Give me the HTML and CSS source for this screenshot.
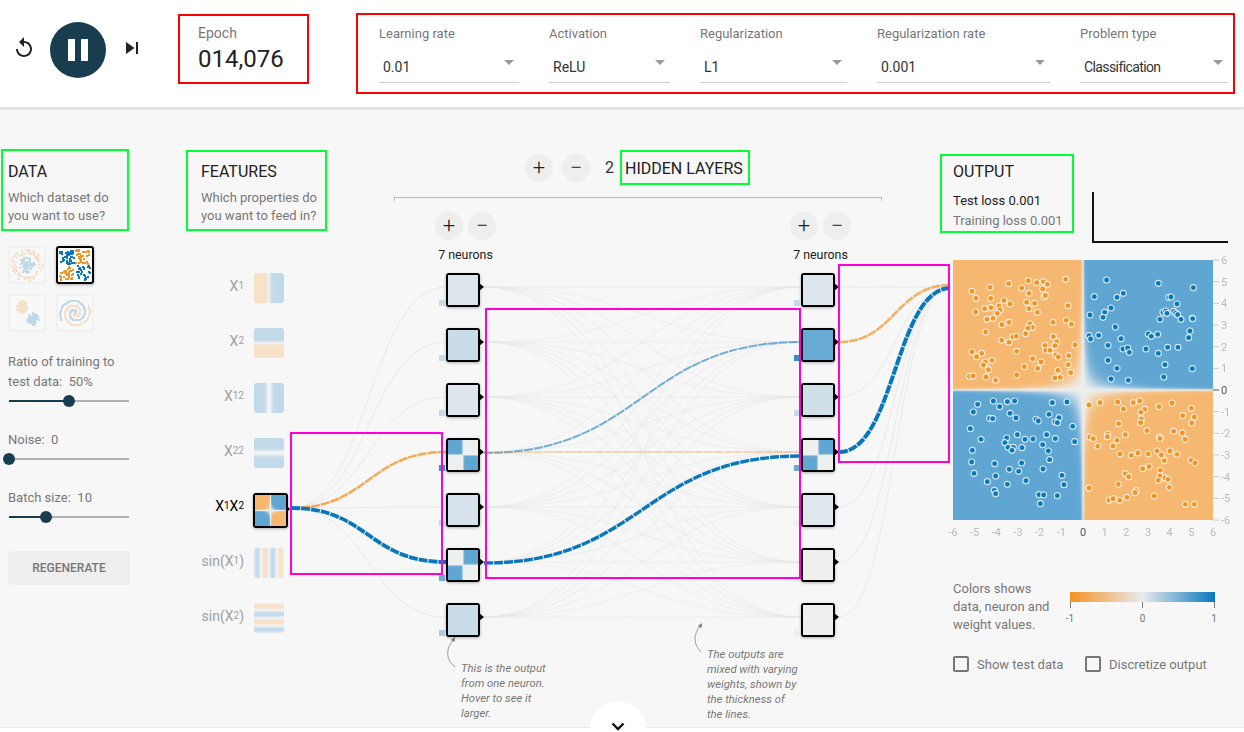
FILE: index.html
```html
<!DOCTYPE html>
<html>
<head>
<meta charset="UTF-8">
<title>Neural Network Playground</title>
<link rel="stylesheet" href="styles.css">
</head>
<body>
<header class="top">
  <div class="controls">
    <svg class="ico" viewBox="0 0 24 24"><path d="M12 5V1L7 6l5 5V7c3.31 0 6 2.69 6 6s-2.69 6-6 6-6-2.69-6-6H4c0 4.42 3.58 8 8 8s8-3.58 8-8-3.58-8-8-8z"/></svg>
    <div class="play"><i></i><i></i></div>
    <svg class="ico" viewBox="0 0 24 24"><path d="M6 18l8.5-6L6 6v12zM16 6v12h2V6h-2z"/></svg>
  </div>
  <div class="epoch">
    <div class="lbl">Epoch</div>
    <div class="val">014,076</div>
  </div>
  <div class="params">
    <div class="field w1"><label>Learning rate</label><div class="sel"><select><option>0.01</option></select></div></div>
    <div class="field w2"><label>Activation</label><div class="sel"><select><option>ReLU</option></select></div></div>
    <div class="field w3"><label>Regularization</label><div class="sel"><select><option>L1</option></select></div></div>
    <div class="field w4"><label>Regularization rate</label><div class="sel"><select><option>0.001</option></select></div></div>
    <div class="field w5"><label>Problem type</label><div class="sel"><select class="tight"><option>Classification</option></select></div></div>
  </div>
</header>

<main class="content">
  <svg id="links" class="links" viewBox="0 108 1244 619"></svg>

  <section class="col-data">
    <div class="head-box data-box">
      <h4>DATA</h4>
      <p>Which dataset do<br>you want to use?</p>
    </div>
    <div class="datasets">
      <div class="ds"><canvas width="34" height="34" data-ds="circle"></canvas></div>
      <div class="ds on"><canvas width="34" height="34" data-ds="xor"></canvas></div>
      <div class="ds"><canvas width="34" height="34" data-ds="gauss"></canvas></div>
      <div class="ds"><canvas width="34" height="34" data-ds="spiral"></canvas></div>
    </div>
    <div class="sl-label">Ratio of training to<br>test data:&nbsp; 50%</div>
    <div class="slider"><b style="width:50%"></b><i style="left:50%"></i></div>
    <div class="sl-label">Noise:&nbsp; 0</div>
    <div class="slider"><b style="width:0%"></b><i style="left:0%"></i></div>
    <div class="sl-label">Batch size:&nbsp; 10</div>
    <div class="slider"><b style="width:31%"></b><i style="left:31%"></i></div>
    <div class="regen">REGENERATE</div>
  </section>

  <section class="col-features">
    <div class="head-box feat-box">
      <h4>FEATURES</h4>
      <p>Which properties do<br>you want to feed in?</p>
    </div>
    <div class="feats">
      <div class="feat"><span class="fname">X<small>1</small></span><canvas width="30" height="30" data-f="x1"></canvas></div>
      <div class="feat"><span class="fname">X<small>2</small></span><canvas width="30" height="30" data-f="x2"></canvas></div>
      <div class="feat"><span class="fname">X<small>12</small></span><canvas width="30" height="30" data-f="x1sq"></canvas></div>
      <div class="feat"><span class="fname">X<small>22</small></span><canvas width="30" height="30" data-f="x2sq"></canvas></div>
      <div class="feat on"><span class="fname">X<small>1</small>X<small>2</small></span><div class="fwrap"><canvas width="31" height="31" data-f="xy"></canvas></div></div>
      <div class="feat"><span class="fname">sin(X<small>1</small>)</span><canvas width="30" height="30" data-f="sin1"></canvas></div>
      <div class="feat"><span class="fname">sin(X<small>2</small>)</span><canvas width="30" height="30" data-f="sin2"></canvas></div>
    </div>
  </section>

  <section class="col-net">
    <div class="hl-row">
      <div class="rbtn">+</div>
      <div class="rbtn">&minus;</div>
      <span class="hl-num">2</span>
      <div class="hl-box">HIDDEN LAYERS</div>
    </div>
    <div class="bracket"></div>
    <div class="layers">
      <div class="layer">
        <div class="lbtns"><div class="rbtn">+</div><div class="rbtn">&minus;</div></div>
        <div class="ncount">7 neurons</div>
        <div class="node"><canvas width="30" height="30" data-v="0.116"></canvas><i class="bias b-pale"></i></div>
        <div class="node"><canvas width="30" height="30" data-v="0.26"></canvas><i class="bias b-pale"></i></div>
        <div class="node"><canvas width="30" height="30" data-v="0.116"></canvas><i class="bias b-pale"></i></div>
        <div class="node"><canvas width="30" height="30" data-x="1"></canvas><i class="bias b-strong"></i></div>
        <div class="node"><canvas width="30" height="30" data-v="0.17"></canvas><i class="bias b-pale"></i></div>
        <div class="node"><canvas width="30" height="30" data-x="-1"></canvas><i class="bias b-mid"></i></div>
        <div class="node"><canvas width="30" height="30" data-v="0.26"></canvas><i class="bias b-soft"></i></div>
      </div>
      <div class="layer">
        <div class="lbtns"><div class="rbtn">+</div><div class="rbtn">&minus;</div></div>
        <div class="ncount">7 neurons</div>
        <div class="node"><canvas width="30" height="30" data-v="0.116"></canvas><i class="bias b-pale"></i></div>
        <div class="node"><canvas width="30" height="30" data-v="0.95"></canvas><i class="bias b-strong"></i></div>
        <div class="node"><canvas width="30" height="30" data-v="0.21"></canvas><i class="bias b-pale"></i></div>
        <div class="node"><canvas width="30" height="30" data-x="-1"></canvas><i class="bias b-mid"></i></div>
        <div class="node"><canvas width="30" height="30" data-v="0.1"></canvas><i class="bias b-faint"></i></div>
        <div class="node"><canvas width="30" height="30" data-v="0"></canvas><i class="bias b-faint"></i></div>
        <div class="node"><canvas width="30" height="30" data-v="0"></canvas><i class="bias b-faint"></i></div>
      </div>
    </div>
  </section>

  <section class="col-output">
    <div class="out-top">
      <div class="head-box out-box">
        <h4>OUTPUT</h4>
        <div class="loss dark">Test loss 0.001</div>
        <div class="loss">Training loss 0.001</div>
      </div>
      <div class="lossline"></div>
    </div>
    <div class="heat">
      <canvas id="heat" width="260" height="260"></canvas>
      <svg id="axis" class="axis"></svg>
    </div>
    <div class="legend">
      <p>Colors shows<br>data, neuron and<br>weight values.</p>
      <svg class="cbar" width="155" height="32" viewBox="-5 0 155 32">
        <defs><linearGradient id="cg"><stop offset="0" stop-color="#f59322"/><stop offset="0.5" stop-color="#e8eaeb"/><stop offset="1" stop-color="#0877bd"/></linearGradient></defs>
        <rect width="145" height="10" fill="url(#cg)"/>
        <path d="M0.5 10v6M72.5 10v6M144.5 10v6" stroke="#777"/>
        <text x="0" y="30">-1</text><text x="72.5" y="30">0</text><text x="144" y="30">1</text>
      </svg>
    </div>
    <div class="checks">
      <div class="chk c1"><i></i>Show test data</div>
      <div class="chk"><i></i>Discretize output</div>
    </div>
  </section>

  <p class="note n1">This is the output<br>from one neuron.<br>Hover to see it<br>larger.</p>
  <p class="note n2">The outputs are<br>mixed with varying<br>weights, shown by<br>the thickness of<br>the lines.</p>

  <div class="mark m1"></div>
  <div class="mark m2"></div>
  <div class="mark m3"></div>
</main>

<footer class="foot">
  <div class="more"><svg width="14" height="9" viewBox="0 0 14 9"><path d="M1.5 1.5L7 7l5.5-5.5" fill="none" stroke="#111" stroke-width="2.4"/></svg></div>
</footer>
<script src="script.js"></script>
</body>
</html>
```

FILE: styles.css
```css
* { box-sizing: border-box; }
html, body { margin: 0; height: 100%; }
body {
  width: 1244px;
  height: 732px;
  overflow: hidden;
  display: flex;
  flex-direction: column;
  background: #fff;
  color: #333;
  font-family: "Roboto", "Liberation Sans", sans-serif;
  font-size: 14px;
}
canvas { display: block; }

/* top bar */
.top {
  height: 108px;
  flex: none;
  display: flex;
  align-items: flex-start;
  background: #fff;
  box-shadow: 0 1px 2px rgba(0,0,0,0.15);
  border-bottom: 1px solid #e4e4e4;
  position: relative;
  z-index: 3;
}
.controls {
  display: flex;
  align-items: center;
  height: 56px;
  margin-top: 22px;
  margin-left: 12px;
}
.ico { width: 24px; height: 24px; margin-bottom: 4px; fill: #222; }
.play {
  width: 56px;
  height: 56px;
  margin: 0 14px;
  border-radius: 50%;
  background: #183d4e;
  display: flex;
  justify-content: center;
  align-items: center;
  gap: 6px;
}
.play i { width: 7px; height: 22px; background: #fff; }
.epoch {
  width: 131px;
  height: 70px;
  margin: 14px 0 0 34px;
  padding: 8px 0 0 18px;
  border: 2px solid #f00;
}
.epoch .lbl { font-size: 14px; line-height: 18px; color: #777; }
.epoch .val { font-size: 24px; line-height: 30px; margin-top: 2px; color: #222; }
.params {
  display: flex;
  gap: 30px;
  margin: 13px 0 0 47px;
  padding: 11px 5px 9px 21px;
  border: 2px solid #f00;
}
.w1 { width: 140px; }
.w2 { width: 121px; }
.w3 { width: 147px; }
.w4 { width: 173px; }
.w5 { width: 148px; }
.field label { display: block; font-size: 13px; line-height: 16px; color: #777; }
.sel { position: relative; margin-top: 11px; }
.sel select {
  display: block;
  width: 100%;
  height: 30px;
  padding: 0 0 2px 4px;
  appearance: none;
  border: 0;
  border-bottom: 1px solid #ccc;
  border-radius: 0;
  background: none;
  color: #333;
  font-family: inherit;
  font-size: 14px;
}
.sel select.tight { letter-spacing: -0.6px; }
.sel::after {
  content: "";
  position: absolute;
  right: 5px;
  top: 7px;
  border-left: 5px solid transparent;
  border-right: 5px solid transparent;
  border-top: 5px solid #999;
}

/* main area */
.content {
  flex: 1;
  display: flex;
  position: relative;
  background: #f7f7f7;
}
.links { position: absolute; left: 0; top: 0; width: 1244px; height: 619px; }
.head-box { border: 2px solid #0f3; }
.head-box h4 { margin: 0; font-size: 16px; line-height: 20px; font-weight: 400; color: #222; }
.head-box p { margin: 7px 0 0; font-size: 13px; line-height: 18px; color: #777; white-space: nowrap; }

.col-data { width: 186px; flex: none; padding-top: 41px; position: relative; }
.data-box { width: 128px; margin-left: 1px; padding: 11px 0 4px 5px; }
.datasets {
  display: grid;
  grid-template-columns: 38px 38px;
  gap: 10px;
  margin: 15px 0 0 8px;
}
.ds { width: 38px; height: 38px; border: 2px solid #ddd; border-radius: 3px; opacity: 0.22; background: #fff; }
.ds.on { border-color: #000; opacity: 1; box-shadow: 0 1px 3px rgba(0,0,0,0.3); }
.sl-label { margin: 20px 0 0 8px; font-size: 13px; line-height: 20px; color: #777; }
.slider { position: relative; width: 120px; height: 18px; margin-left: 9px; }
.slider::before { content: ""; position: absolute; left: 0; right: 0; top: 8px; height: 2px; background: #b0b0b0; }
.slider b { position: absolute; left: 0; top: 8px; height: 2px; background: #183d4e; }
.slider i { position: absolute; top: 3px; width: 12px; height: 12px; margin-left: -6px; border-radius: 50%; background: #183d4e; }
.regen {
  width: 122px;
  height: 34px;
  margin: 25px 0 0 8px;
  border-radius: 3px;
  background: #eee;
  color: #777;
  font-size: 12px;
  font-weight: 500;
  line-height: 34px;
  text-align: center;
}

.col-features { width: 208px; flex: none; padding-top: 42px; position: relative; }
.feat-box { width: 141px; padding: 10px 0 4px 13px; }
.feats { display: flex; flex-direction: column; gap: 25px; margin-top: 42px; }
.feat { display: flex; height: 30px; gap: 10px; }
.fname { width: 58px; font-size: 14px; line-height: 26px; text-align: right; color: #a0a0a0; white-space: nowrap; }
.fname small { font-size: 10px; vertical-align: 2px; }
.feat canvas { border-radius: 3px; opacity: 0.36; }
.feat.on .fname { color: #000; }
.fwrap {
  position: relative;
  width: 35px;
  height: 35px;
  margin-left: -1px;
  flex: none;
  border: 2px solid #000;
  border-radius: 3px;
  box-shadow: 0 1px 3px rgba(0,0,0,0.3);
}
.feat .fwrap canvas { opacity: 1; border-radius: 0; }
.fwrap::after {
  content: "";
  position: absolute;
  left: 31px;
  top: 10px;
  border-left: 4px solid #000;
  border-top: 4px solid transparent;
  border-bottom: 4px solid transparent;
}

.col-net { width: 488px; flex: none; margin-right: 58px; padding-top: 42px; position: relative; }
.hl-row { display: flex; align-items: center; height: 35px; padding-left: 131px; }
.rbtn {
  width: 28px;
  height: 28px;
  border-radius: 50%;
  background: #eee;
  color: #222;
  font-size: 22px;
  font-weight: 300;
  line-height: 27px;
  text-align: center;
}
.hl-row .rbtn + .rbtn { margin-left: 9px; }
.hl-num { margin-left: 15px; width: 15px; font-size: 16px; color: #333; }
.hl-box { width: 130px; height: 35px; padding-left: 3px; border: 2px solid #0f3; font-size: 16px; line-height: 33px; color: #222; white-space: nowrap; }
.bracket { height: 4px; margin-top: 12px; border: 1px solid #bbb; border-bottom: 0; }
.layers { display: flex; gap: 294px; margin-top: 11px; padding-left: 41px; }
.layer { width: 61px; }
.lbtns { display: flex; gap: 5px; }
.ncount { margin-top: 7px; font-size: 12.4px; line-height: 16px; text-align: center; color: #222; white-space: nowrap; }
.node {
  position: relative;
  width: 34px;
  height: 34px;
  margin: 21px 0 0 11px;
  border: 2px solid #000;
  border-radius: 3px;
  background: #fff;
  box-shadow: 0 1px 3px rgba(0,0,0,0.3);
}
.ncount + .node { margin-top: 10px; }
.node::after {
  content: "";
  position: absolute;
  left: 31px;
  top: 8px;
  border-left: 5px solid #000;
  border-top: 4.5px solid transparent;
  border-bottom: 4.5px solid transparent;
}
.bias { position: absolute; left: -9px; top: 25px; width: 6px; height: 6px; }
.b-faint { background: #eeeef0; }
.b-pale { background: #c5dbea; }
.b-soft { background: #a9cce3; }
.b-mid { background: #6ca9d6; }
.b-strong { background: #3b8fc9; }

/* output column */
.col-output { width: 304px; flex: none; padding-top: 46px; position: relative; }
.out-top { display: flex; align-items: flex-start; }
.out-box { width: 134px; height: 79px; padding: 6px 0 0 11px; }
.loss { font-size: 13px; line-height: 20px; color: #777; white-space: nowrap; }
.loss.dark { margin-top: 9px; color: #222; }
.lossline { width: 136px; height: 51px; margin: 38px 0 0 18px; border-left: 2px solid #111; border-bottom: 2px solid #111; }
.heat { position: relative; width: 260px; height: 260px; margin: 17px 0 0 13px; }
.axis { position: absolute; left: 0; top: 0; width: 260px; height: 260px; overflow: visible; }
.axis text { font-family: inherit; font-size: 11px; fill: #bbb; }
.axis text.zero { fill: #555; }
.legend { display: flex; margin: 60px 0 0 13px; }
.legend p { width: 112px; margin: 0; font-size: 13px; line-height: 18px; color: #777; }
.cbar { margin-top: 12px; }
.cbar text { font-family: inherit; font-size: 10px; fill: #777; text-anchor: middle; }
.checks { display: flex; margin: 22px 0 0 13px; }
.chk { display: flex; align-items: center; height: 16px; font-size: 13px; color: #777; white-space: nowrap; }
.chk.c1 { width: 132px; }
.chk i { width: 16px; height: 16px; margin-right: 8px; border: 2px solid #777; border-radius: 2px; }

/* notes and marks over the diagram */
.note { position: absolute; margin: 0; font-size: 11.3px; font-style: italic; line-height: 15px; color: #777; white-space: nowrap; }
.n1 { left: 461px; top: 553px; }
.n2 { left: 707px; top: 539px; }
.mark { position: absolute; border: 2px solid #ff00dc; }
.m1 { left: 290px; top: 324px; width: 153px; height: 143px; }
.m2 { left: 485px; top: 200px; width: 316px; height: 271px; }
.m3 { left: 838px; top: 156px; width: 112px; height: 199px; }

.foot {
  height: 5px;
  flex: none;
  position: relative;
  z-index: 2;
  background: #fff;
  border-top: 1px solid #e8e8e8;
}
.more {
  position: absolute;
  left: 590px;
  top: -27px;
  width: 56px;
  height: 56px;
  border-radius: 50%;
  background: #fff;
  display: flex;
  justify-content: center;
  padding-top: 21px;
}
```

FILE: script.js
```js
// small seeded random so the thumbnails look the same every load
var seed = 4711;
function rnd() { seed = (seed * 16807) % 2147483647; return seed / 2147483647; }
function tanh(v) { return Math.tanh(v); }

// -1 orange, 0 light grey, 1 blue
function colorOf(v, alpha) {
  var a = [245,147,34], m = [232,234,235], b = [8,119,189], c = [], i, t = Math.abs(v), e = v < 0 ? a : b;
  for (i = 0; i < 3; i++) c[i] = m[i] + (e[i] - m[i]) * t;
  // blended over the page grey
  for (i = 0; i < 3; i++) c[i] = Math.round(c[i] * alpha + 247 * (1 - alpha));
  return c;
}

function paint(cv, fn) {
  var ctx = cv.getContext("2d"), w = cv.width, h = cv.height;
  var img = ctx.createImageData(w, h), x, y, c, p = 0;
  for (y = 0; y < h; y++) {
    for (x = 0; x < w; x++) {
      c = colorOf(fn((x + 0.5) / w * 2 - 1, 1 - (y + 0.5) / h * 2), 0.63);
      img.data[p++] = c[0]; img.data[p++] = c[1]; img.data[p++] = c[2]; img.data[p++] = 255;
    }
  }
  ctx.putImageData(img, 0, 0);
}

// feature thumbnails, u and v are -1..1, scaled to -6..6
var feats = {
  x1: function(u, v) { return tanh(u * 6 * 1.2); },
  x2: function(u, v) { return tanh(v * 6 * 1.2); },
  x1sq: function(u, v) { return tanh(u * u * 36 * 0.5); },
  x2sq: function(u, v) { return tanh(v * v * 36 * 0.5); },
  xy: function(u, v) { return tanh(u * v * 36 * 0.8); },
  sin1: function(u, v) { return Math.sin(u * 6); },
  sin2: function(u, v) { return Math.sin(v * 6); }
};
document.querySelectorAll("canvas[data-f]").forEach(function(cv) { paint(cv, feats[cv.dataset.f]); });

// neuron thumbnails
document.querySelectorAll("canvas[data-v]").forEach(function(cv) {
  var val = Number(cv.dataset.v);
  paint(cv, function(u, v) { return val; });
});
document.querySelectorAll("canvas[data-x]").forEach(function(cv) {
  var s = Number(cv.dataset.x);
  paint(cv, function(u, v) {
    if (s * u * v > 0) return 0;
    return tanh(Math.abs(u) * 16) * tanh(Math.abs(v) * 16);
  });
});

// dataset thumbnails
function dot(ctx, x, y, col) { ctx.fillStyle = col; ctx.fillRect(Math.round(x), Math.round(y), 2, 2); }
var BLUE = "#0877bd", ORANGE = "#f59322";
var sets = {
  circle: function(ctx) {
    var i, a, r;
    for (i = 0; i < 90; i++) { a = rnd() * 6.28; r = rnd() * 8; dot(ctx, 16 + r * Math.cos(a), 16 + r * Math.sin(a), BLUE); }
    for (i = 0; i < 90; i++) { a = rnd() * 6.28; r = 11 + rnd() * 5; dot(ctx, 16 + r * Math.cos(a), 16 + r * Math.sin(a), ORANGE); }
  },
  xor: function(ctx) {
    var i, x, y;
    for (i = 0; i < 170; i++) {
      x = 1 + rnd() * 30; y = 1 + rnd() * 30;
      if (Math.abs(x - 16) < 1 || Math.abs(y - 16) < 1) continue;
      dot(ctx, x, y, (x - 16) * (y - 16) > 0 ? BLUE : ORANGE);
    }
  },
  gauss: function(ctx) {
    var i, a, r;
    for (i = 0; i < 90; i++) { a = rnd() * 6.28; r = rnd() * 6; dot(ctx, 11 + r * Math.cos(a), 10 + r * Math.sin(a), ORANGE); }
    for (i = 0; i < 90; i++) { a = rnd() * 6.28; r = rnd() * 6; dot(ctx, 22 + r * Math.cos(a), 22 + r * Math.sin(a), BLUE); }
  },
  spiral: function(ctx) {
    var i, t, r;
    for (i = 0; i < 110; i++) {
      t = i / 110 * 10; r = t * 1.55;
      dot(ctx, 16 + r * Math.cos(t), 16 - r * Math.sin(t), BLUE);
      dot(ctx, 16 - r * Math.cos(t), 16 + r * Math.sin(t), ORANGE);
    }
  }
};
document.querySelectorAll("canvas[data-ds]").forEach(function(cv) { sets[cv.dataset.ds](cv.getContext("2d")); });

// output heatmap
var heat = document.getElementById("heat");
paint(heat, function(u, v) { return tanh(u * v * 36 * 2.5); });

// points read as [page x, page y]
var orange = [], blue = [];
function addTop(list, pts) { for (var i = 0; i < pts.length; i += 2) list.push([pts[i] / 3 + 940 - 953, pts[i + 1] / 3 + 150 - 260]); }
function addBot(list, pts) { for (var i = 0; i < pts.length; i += 2) list.push([pts[i] / 3 + 940 - 953, pts[i + 1] / 3 + 400 - 260]); }
addTop(orange, [96,424,108,445,150,412,152,445,134,476,107,486,153,473,177,468,180,480,172,490,159,505,141,508,192,451,210,462,206,401,245,414,265,392,290,398,310,395,322,403,308,417,267,430,260,457,284,460,267,476,292,487,312,441,316,436,377,388,384,467,379,511,394,523,339,517,207,517,186,524,270,522,277,532,264,535,257,551,137,546,219,561,229,559,185,571,207,577,340,560,350,575,345,587,315,586,317,601,330,601,405,585,230,604,96,606,110,620,125,610,156,631,136,636,130,645,145,659,278,626,303,636,293,655,253,650,347,615,355,621,386,617,385,644,354,661,392,668,345,684,361,682,230,675,167,691,138,681,88,679,99,678]);
addTop(blue, [500,390,655,400,760,413,463,440,531,442,550,430,686,442,693,441,711,462,513,474,494,487,489,502,450,495,669,487,677,483,681,490,701,484,707,489,713,494,723,508,660,508,757,505,758,506,526,531,447,557,452,567,476,556,543,566,625,552,634,559,653,553,750,543,746,563,504,586,549,597,563,594,568,607,618,597,655,610,683,592,714,592,504,631,531,655,675,644,757,656,513,687,565,691,671,681]);
addBot(orange, [447,15,480,8,533,6,580,8,599,3,550,27,614,28,603,37,657,20,696,9,754,25,728,47,763,51,755,69,604,57,602,68,536,71,621,92,449,111,460,116,503,102,502,110,531,121,556,104,519,138,473,139,701,94,727,99,735,118,658,111,660,116,540,162,574,166,594,159,625,162,651,153,664,165,690,153,711,163,673,182,753,181,765,189,608,206,627,200,661,211,660,228,655,241,675,234,684,238,556,221,566,230,535,253,447,264,589,272,585,278,688,262,643,288,507,301,519,296,539,301,561,292,736,313,763,313]);
addBot(blue, [113,13,160,3,179,20,202,5,224,3,337,8,381,6,100,36,149,55,158,56,210,40,228,54,327,43,288,58,295,63,357,53,345,66,352,68,398,79,91,86,123,118,200,114,195,128,204,142,220,142,216,151,246,143,232,104,255,118,279,117,320,104,346,116,308,134,325,153,404,125,97,151,95,186,164,191,245,189,329,179,102,220,208,208,236,214,309,207,167,228,366,226,142,245,258,242,202,253,372,254,163,271,167,281,297,284,311,285,352,287,301,311]);
var hctx = heat.getContext("2d");
function drawPts(list, col) {
  list.forEach(function(p) {
    hctx.beginPath();
    hctx.arc(p[0], p[1], 3, 0, 6.29);
    hctx.fillStyle = col;
    hctx.fill();
    hctx.lineWidth = 1.1;
    hctx.strokeStyle = "rgba(255,255,255,0.8)";
    hctx.stroke();
  });
}
drawPts(orange, ORANGE);
drawPts(blue, BLUE);

// svg helper
var NS = "http://www.w3.org/2000/svg";
function el(parent, tag, attrs, txt) {
  var e = document.createElementNS(NS, tag);
  for (var k in attrs) e.setAttribute(k, attrs[k]);
  if (txt !== undefined) e.textContent = txt;
  parent.appendChild(e);
  return e;
}

// heatmap axes
var axis = document.getElementById("axis"), i, pos;
for (i = -6; i <= 6; i++) {
  pos = (i + 6) * 260 / 12;
  el(axis, "text", { x: pos, y: 276, "text-anchor": "middle", "class": i == 0 ? "zero" : "" }, i);
  el(axis, "line", { x1: 260, x2: 266, y1: 260 - pos, y2: 260 - pos, stroke: i == 0 ? "#555" : "#ccc" });
  el(axis, "text", { x: 268, y: 264 - pos, "class": i == 0 ? "zero" : "" }, i);
}

// network links, page coordinates
var links = document.getElementById("links");
function curve(x0, y0, x1, y1) {
  var m = (x0 + x1) / 2;
  return "M" + x0 + " " + y0 + "C" + m + " " + y0 + " " + m + " " + y1 + " " + x1 + " " + y1;
}
function link(x0, y0, x1, y1, col, w, op) {
  el(links, "path", { d: curve(x0, y0, x1, y1), fill: "none", stroke: col, "stroke-width": w, "stroke-opacity": op, "stroke-dasharray": w > 1.2 ? "9 1" : "none" });
}
var rows = [287, 342, 397, 452, 507, 562, 617], a, b;
for (a = 0; a < 7; a++) link(291, 508, 446, rows[a], "#e0e0e0", 1, 0.6);
for (a = 0; a < 7; a++) for (b = 0; b < 7; b++) link(484, rows[a], 801, rows[b], "#e6e6e6", 1, 0.6);
for (a = 0; a < 7; a++) link(839, rows[a], 951, 287, "#e0e0e0", 1, 0.6);

link(291, 508, 446, 452, ORANGE, 2.6, 0.75);
link(291, 508, 446, 562, BLUE, 3.8, 1);
link(484, 453, 801, 342, BLUE, 2, 0.55);
link(484, 452, 801, 452, ORANGE, 1.6, 0.4);
link(484, 563, 801, 456, BLUE, 3.4, 1);
link(839, 342, 951, 285, ORANGE, 2.6, 0.7);
link(839, 452, 951, 288, BLUE, 4, 1);

// little arrows of the notes
function arrow(d, tip) {
  el(links, "path", { d: d, fill: "none", stroke: "#999" });
  el(links, "path", { d: tip, fill: "#777" });
}
arrow("M455 667C446 660 445 649 454 639", "M455 637L454.5 642L451 640z");
arrow("M701 652C693 644 693 634 701 625", "M702 623L701.5 628L698 626z");
```
